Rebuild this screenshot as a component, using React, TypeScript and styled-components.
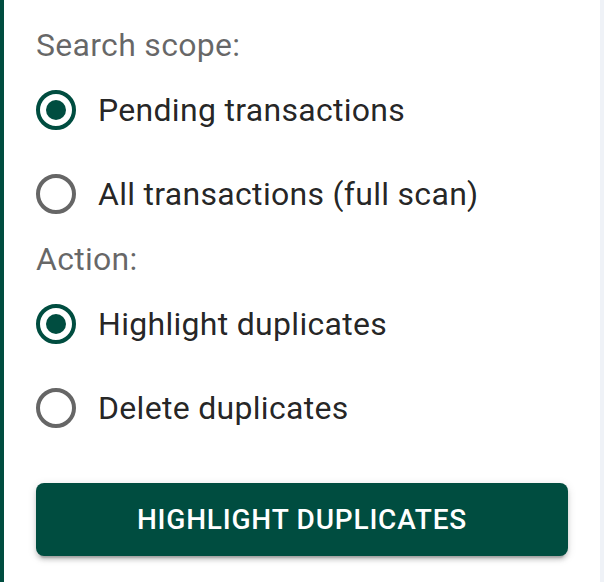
import React, { useState } from "react";
import styled, { createGlobalStyle } from "styled-components";

const GlobalStyle = createGlobalStyle`
  html, body {
    margin: 0;
    padding: 0;
    background: #eff2f7;
  }
  body {
    font-family: Roboto, "Liberation Sans", sans-serif;
  }
`;

interface Option {
  value: string;
  label: string;
}

const scopeOptions: Option[] = [
  { value: "pending", label: "Pending transactions" },
  { value: "all", label: "All transactions (full scan)" },
];

const actionOptions: Option[] = [
  { value: "highlight", label: "Highlight duplicates" },
  { value: "delete", label: "Delete duplicates" },
];

function RadioGroup({
  options,
  value,
  onChange,
}: {
  options: Option[];
  value: string;
  onChange: (v: string) => void;
}) {
  return (
    <Group>
      {options.map((opt) => (
        <RadioRow key={opt.value} onClick={() => onChange(opt.value)}>
          <RadioBox>
            <RadioRing $checked={value === opt.value}>
              {value === opt.value && <RadioDot />}
            </RadioRing>
          </RadioBox>
          <RadioLabel>{opt.label}</RadioLabel>
        </RadioRow>
      ))}
    </Group>
  );
}

export default function App() {
  const [scope, setScope] = useState("pending");
  const [action, setAction] = useState("highlight");

  return (
    <>
      <GlobalStyle />
      <Panel>
        <SectionLabel>Search scope:</SectionLabel>
        <RadioGroup options={scopeOptions} value={scope} onChange={setScope} />
        <SectionLabel>Action:</SectionLabel>
        <RadioGroup options={actionOptions} value={action} onChange={setAction} />
        <ActionButton>
          {action === "highlight" ? "Highlight duplicates" : "Delete duplicates"}
        </ActionButton>
      </Panel>
    </>
  );
}

const Panel = styled.div`
  width: 600px;
  height: 582px;
  box-sizing: border-box;
  background: #ffffff;
  border-left: 4px solid #004d40;
  padding: 22px 32px 0 32px;
  display: flex;
  flex-direction: column;
`;

const SectionLabel = styled.div`
  color: rgba(0, 0, 0, 0.6);
  font-size: 32px;
  line-height: 46px;
  font-weight: 400;
  letter-spacing: 0.3px;
`;

const Group = styled.div`
  display: flex;
  flex-direction: column;
`;

const RadioRow = styled.label`
  display: flex;
  align-items: center;
  height: 84px;
  margin-left: -22px;
  cursor: pointer;
`;

const RadioBox = styled.span`
  width: 84px;
  height: 84px;
  display: flex;
  align-items: center;
  justify-content: center;
  flex-shrink: 0;
`;

const RadioRing = styled.span<{ $checked: boolean }>`
  width: 40px;
  height: 40px;
  box-sizing: border-box;
  border-radius: 50%;
  border: 4px solid ${(p) => (p.$checked ? "#004d40" : "#666666")};
  display: flex;
  align-items: center;
  justify-content: center;
`;

const RadioDot = styled.span`
  width: 20px;
  height: 20px;
  border-radius: 50%;
  background: #004d40;
`;

const RadioLabel = styled.span`
  color: rgba(0, 0, 0, 0.87);
  font-size: 32px;
  line-height: 48px;
  letter-spacing: 0.3px;
`;

const ActionButton = styled.button`
  margin-top: 33px;
  height: 73px;
  width: 100%;
  border: none;
  border-radius: 8px;
  background: #004d40;
  color: #ffffff;
  font-family: Roboto, "Liberation Sans", sans-serif;
  font-size: 28px;
  font-weight: 500;
  letter-spacing: 0.8px;
  text-transform: uppercase;
  box-shadow: 0 6px 2px -4px rgba(0, 0, 0, 0.2), 0 4px 4px 0 rgba(0, 0, 0, 0.14),
    0 2px 10px 0 rgba(0, 0, 0, 0.12);
  cursor: pointer;
`;
